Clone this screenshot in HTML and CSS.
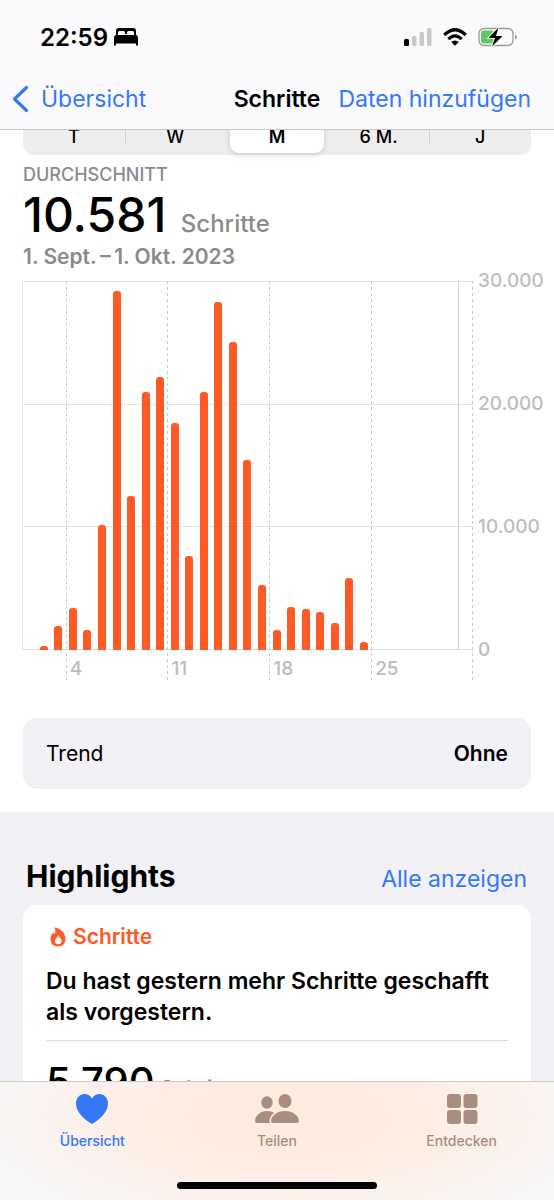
FILE: index.html
```html
<!DOCTYPE html>
<html lang="de">
<head>
<meta charset="UTF-8">
<meta name="viewport" content="width=device-width, initial-scale=1.0">
<title>Schritte</title>
<link rel="stylesheet" href="styles.css">
</head>
<body>
<header class="top">
    <div class="status">
        <div class="status-left">
            <span>22:59</span>
            <svg width="26" height="18" viewBox="0 0 26 18" aria-hidden="true">
                <path d="M3 7V3q0-3 3-3h14q3 0 3 3v4h-2V4.500q0-1.500-1.500-1.500h-4q-1.500 0-1.500 1.500V6h-2V4.500q0-1.500-1.500-1.500h-4q-1.500 0-1.500 1.500V7z"/>
                <path d="M3.500 7h19q2.500 0 2.500 3v7.500h-2V15.500H3v2H1V10q0-3 2.500-3z"/>
            </svg>
        </div>
        <div class="status-right">
            <svg width="28" height="18" viewBox="0 0 28 18" aria-hidden="true">
                <rect x="0" y="11" width="5" height="7" rx="1.500"/>
                <g fill="#c9c9cb">
                    <rect x="8" y="8" width="4.500" height="10" rx="1.500"/>
                    <rect x="15.500" y="4" width="4.500" height="14" rx="1.500"/>
                    <rect x="23" y="0" width="4.500" height="18" rx="1.500"/>
                </g>
            </svg>
            <svg width="24" height="18" viewBox="0 0 24 18" aria-hidden="true">
                <g fill="none" stroke="#000" stroke-width="3.200">
                    <path d="M1.300 7Q12-3.400 22.700 7"/>
                    <path d="M5.300 11.200Q12 4.600 18.700 11.200"/>
                </g>
                <path d="M8.200 14Q12 10.800 15.800 14L12 17.800z"/>
            </svg>
            <svg width="40" height="20" viewBox="0 0 40 20" aria-hidden="true">
                <rect x="1" y="1.500" width="34" height="17" rx="5" fill="none" stroke="#9b9b9e" stroke-width="1.300"/>
                <path d="M37 7.500q2 1 2 2.500t-2 2.500z" fill="#9b9b9e"/>
                <rect x="3" y="3.500" width="13" height="13" rx="3" fill="#5fc963"/>
                <path d="M20.500 0.500L10.500 11h6.500L14 19.500 24.500 9H18z" stroke="#fafafc" stroke-width="1.800" paint-order="stroke"/>
            </svg>
        </div>
    </div>
    <nav class="navbar">
        <a class="back" href="#">
            <svg width="17" height="28" viewBox="0 0 17 28" aria-hidden="true">
                <path d="M14.500 2.500L2.500 14l12 11.500" fill="none" stroke="#3478f6" stroke-width="3.200" stroke-linecap="round" stroke-linejoin="round"/>
            </svg>
            Übersicht
        </a>
        <h1>Schritte</h1>
        <a class="add" href="#">Daten hinzufügen</a>
    </nav>
</header>

<main class="content">
    <div class="segments">
        <button type="button">T</button>
        <button type="button" class="divided">W</button>
        <button type="button" class="selected" aria-pressed="true">M</button>
        <button type="button">6 M.</button>
        <button type="button" class="divided">J</button>
    </div>

    <section class="summary">
        <p class="caption">DURCHSCHNITT</p>
        <p class="total"><strong>10.581</strong> <span>Schritte</span></p>
        <p class="range">1. Sept.&#8201;–&#8201;1. Okt. 2023</p>
    </section>

    <section class="chart">
        <div class="lines"><i></i><i></i><i></i></div>
        <div class="weeks">
            <span></span>
            <span>4</span>
            <span>11</span>
            <span>18</span>
            <span>25</span>
            <span class="month-end"></span>
        </div>
        <div class="bars">
            <i style="height: 0%"></i>
            <i style="height: 1%"></i>
            <i style="height: 6.4%"></i>
            <i style="height: 11.4%"></i>
            <i style="height: 5.3%"></i>
            <i style="height: 33.9%"></i>
            <i style="height: 97.3%"></i>
            <i style="height: 41.7%"></i>
            <i style="height: 70%"></i>
            <i style="height: 73.9%"></i>
            <i style="height: 61.6%"></i>
            <i style="height: 25.4%"></i>
            <i style="height: 69.9%"></i>
            <i style="height: 94.4%"></i>
            <i style="height: 83.4%"></i>
            <i style="height: 51.6%"></i>
            <i style="height: 17.5%"></i>
            <i style="height: 5.3%"></i>
            <i style="height: 11.7%"></i>
            <i style="height: 11.1%"></i>
            <i style="height: 10.2%"></i>
            <i style="height: 7.2%"></i>
            <i style="height: 19.4%"></i>
            <i style="height: 2.1%"></i>
        </div>
        <div class="scale">
            <span>30.000</span>
            <span>20.000</span>
            <span>10.000</span>
            <span>0</span>
        </div>
    </section>

    <button type="button" class="trend"><span>Trend</span><b>Ohne</b></button>

    <section class="highlights">
        <div class="section-head">
            <h2>Highlights</h2>
            <a href="#">Alle anzeigen</a>
        </div>
        <article class="card">
            <h3>
                <svg width="16" height="20" viewBox="0 0 16 20" aria-hidden="true">
                    <path fill-rule="evenodd" d="M4 0.500C10 .5 15.500 6 15.500 12c0 4.500-3 7.500-7.500 7.500S.5 16.500.5 12.300C.5 9.500 1.500 7.500 3 5.500L4.200 7C6 5 5.800 2.500 4 .5zM8.800 7.500c.2 2-3.800 3.500-3.800 6.500 0 2 1.300 3.300 3.200 3.300s3.400-1.300 3.400-3.300c0-1.200-.4-2.200-1.200-3l-.8 1.200c-.2-1.700-.2-3.200-.8-4.700z"/>
                </svg>
                Schritte
            </h3>
            <p class="message">Du hast gestern mehr Schritte geschafft als vorgestern.</p>
            <p class="value"><strong>5.790</strong> <span>Schritte</span></p>
        </article>
    </section>
</main>

<footer class="bottom">
    <nav class="tabs">
        <a class="active" href="#">
            <svg width="34" height="32" viewBox="0 0 34 32" aria-hidden="true">
                <path d="M17 31C11 27.500 1 20 1 10.500 1 5 4.800 1 9.500 1c3.300 0 6 1.700 7.500 4.500C18.500 2.700 21.200 1 24.500 1 29.200 1 33 5 33 10.500 33 20 23 27.500 17 31z"/>
            </svg>
            Übersicht
        </a>
        <a href="#">
            <svg width="46" height="32" viewBox="0 0 46 32" aria-hidden="true">
                <ellipse cx="13" cy="9.500" rx="5.700" ry="6.200"/>
                <path d="M13 18c3 0 5.500.8 7.500 2.200-3 2.300-4.800 5.300-4 9.800H3q-2 0-2-2c0-5 5-10 12-10z"/>
                <ellipse cx="31" cy="8" rx="6.500" ry="7"/>
                <path d="M31 18c8 0 14 5 14 10q0 2-2.500 2h-23q-2.500 0-2.500-2c0-5 6-10 14-10z" stroke="#ffece1" stroke-width="3" paint-order="stroke"/>
            </svg>
            Teilen
        </a>
        <a href="#">
            <svg width="32" height="32" viewBox="0 0 32 32" aria-hidden="true">
                <rect x="1" y="1" width="14" height="14" rx="3"/>
                <rect x="17.500" y="1" width="14" height="14" rx="3"/>
                <rect x="1" y="17" width="14" height="14" rx="3"/>
                <rect x="17.500" y="17" width="14" height="14" rx="3"/>
            </svg>
            Entdecken
        </a>
    </nav>
    <div class="home-bar"></div>
</footer>
</body>
</html>
```

FILE: styles.css
```css
* {
    box-sizing: border-box;
}
body {
    margin: 0;
    height: 100vh;
    display: flex;
    flex-direction: column;
    overflow: hidden;
    font-family: Inter, "Liberation Sans", sans-serif;
    color: #000;
    background: #fff;
}
h1, h2, h3, p {
    margin: 0;
}
a {
    color: #3478f6;
    text-decoration: none;
}
button {
    border: none;
    font-family: inherit;
    color: inherit;
    cursor: pointer;
}

/* Header */
.top {
    flex: none;
    background: #fafafc;
    border-bottom: 1px solid #c8c8cb;
}
.status {
    display: flex;
    justify-content: space-between;
    align-items: center;
    height: 72px;
    padding: 2px 36px 0 40px;
    font-size: 24px;
    font-weight: 600;
}
.status-left {
    display: flex;
    align-items: center;
    gap: 5px;
}
.status-right {
    display: flex;
    align-items: center;
    gap: 11px;
}
.navbar {
    display: grid;
    grid-template-columns: 1fr auto 1fr;
    align-items: center;
    height: 57px;
    padding: 0 23px 4px;
    font-size: 23px;
}
.navbar h1 {
    font-size: 23px;
    font-weight: 600;
}
.back {
    display: flex;
    align-items: center;
    gap: 12px;
    margin-left: -11px;
}
.add {
    justify-self: end;
    white-space: nowrap;
}

/* Content, scrolled a little under the header */
.content {
    flex: 1;
    min-height: 0;
    overflow: hidden;
}
.segments {
    display: grid;
    grid-template-columns: repeat(5, 1fr);
    height: 42px;
    margin: -17px 23px 0;
    border-radius: 11px;
    background: #eeeeef;
}
.segments button {
    padding: 4px 0 0;
    background: none;
    font-size: 18px;
    font-weight: 500;
}
.segments .divided {
    background: linear-gradient(#d3d3d6, #d3d3d6) left center / 1px 22px no-repeat;
}
.segments .selected {
    margin: 2px 4px;
    border-radius: 9px;
    background: #fff;
    box-shadow: 0 2px 6px rgba(0, 0, 0, 0.15);
    font-weight: 600;
}
.summary {
    padding: 9px 23px 0;
    color: #8a8a8e;
}
.caption {
    font-size: 18px;
    font-weight: 500;
    line-height: 22px;
}
.total {
    padding-top: 7px;
    font-size: 24px;
    font-weight: 500;
    line-height: 44px;
}
.total strong {
    margin-right: 8px;
    font-size: 48px;
    font-weight: 500;
    color: #000;
}
.range {
    font-size: 21px;
    font-weight: 600;
    line-height: 22px;
}

/* Chart */
.chart {
    display: grid;
    grid-template-columns: 1fr 81px;
    grid-template-rows: 369px 30px;
    margin: 13px 0 0 22px;
    color: #bcbcc0;
    font-size: 19px;
    font-weight: 500;
}
.lines {
    grid-area: 1 / 1;
    display: grid;
    border: 1px solid #e3e3e6;
    border-top: none;
    border-right: none;
}
.lines i {
    border-top: 1px solid #e3e3e6;
}
.weeks {
    grid-area: 1 / 1 / 3 / 2;
    display: grid;
    grid-template-columns: 3fr 7fr 7fr 7fr 6fr 1fr;
    background: repeating-linear-gradient(#c8c8cb 0 3px, transparent 3px 6px) right top / 1px 100% no-repeat;
}
.weeks span {
    display: flex;
    align-items: flex-end;
    padding: 0 0 1px 4px;
    line-height: 20px;
    background: repeating-linear-gradient(#c8c8cb 0 3px, transparent 3px 6px) left top / 1px 100% no-repeat;
}
.weeks span:first-child {
    background: none;
}
.weeks .month-end {
    margin-bottom: 30px;
    background: linear-gradient(#d3d3d6, #d3d3d6) left top / 1px 100% no-repeat;
}
.bars {
    grid-area: 1 / 1;
    display: grid;
    grid-template-columns: repeat(31, 1fr);
    align-items: end;
    justify-items: center;
}
.bars i {
    width: 8px;
    border-radius: 3px 3px 0 0;
    background: #ff5a26;
}
.scale {
    grid-area: 1 / 2 / 3 / 3;
    display: flex;
    flex-direction: column;
    justify-content: space-between;
    margin: -10px 0 20px;
    padding-left: 5px;
    line-height: 20px;
}
.trend {
    display: flex;
    justify-content: space-between;
    align-items: center;
    width: calc(100% - 46px);
    height: 71px;
    margin: 38px 23px 23px;
    padding: 0 23px;
    border-radius: 14px;
    background: #f1f1f6;
    font-size: 21px;
}
.trend b {
    font-weight: 600;
}

/* Highlights */
.highlights {
    padding: 44px 23px 23px;
    background: #f1f1f6;
}
.section-head {
    display: flex;
    justify-content: space-between;
    align-items: baseline;
    padding: 0 4px 0 3px;
    line-height: 40px;
}
.section-head h2 {
    font-size: 30px;
    font-weight: 700;
}
.section-head a {
    font-size: 23px;
}
.card {
    margin-top: 6px;
    padding: 17px 23px;
    border-radius: 14px;
    background: #fff;
}
.card h3 {
    display: flex;
    align-items: center;
    gap: 7px;
    padding-left: 4px;
    font-size: 21px;
    font-weight: 600;
    line-height: 30px;
    color: #ff5a26;
    fill: #ff5a26;
}
.message {
    padding: 14px 0 12px;
    border-bottom: 1px solid #d9d9dc;
    font-size: 23px;
    font-weight: 600;
    line-height: 31px;
}
.value {
    margin-top: 16px;
    font-size: 21px;
    font-weight: 500;
    line-height: 50px;
    color: #8a8a8e;
}
.value strong {
    font-size: 40px;
    font-weight: 500;
    color: #000;
}

/* Tab bar */
.bottom {
    flex: none;
    height: 119px;
    border-top: 1px solid #cfc9c9;
    background: radial-gradient(ellipse 54% 95% at 52% 30%, #ffebdf 0%, #ffede3 45%, #f8f6f6 100%);
}
.tabs {
    display: grid;
    grid-template-columns: repeat(3, 1fr);
    height: 100px;
    padding-top: 11px;
}
.tabs a {
    display: flex;
    flex-direction: column;
    align-items: center;
    gap: 7px;
    font-size: 14px;
    font-weight: 500;
    line-height: 18px;
    color: #a98d80;
    fill: #a98d80;
}
.tabs .active {
    color: #3478f6;
    fill: #3478f6;
}
.home-bar {
    width: 36%;
    height: 7px;
    margin: 0 auto;
    border-radius: 4px;
    background: #000;
}
```
